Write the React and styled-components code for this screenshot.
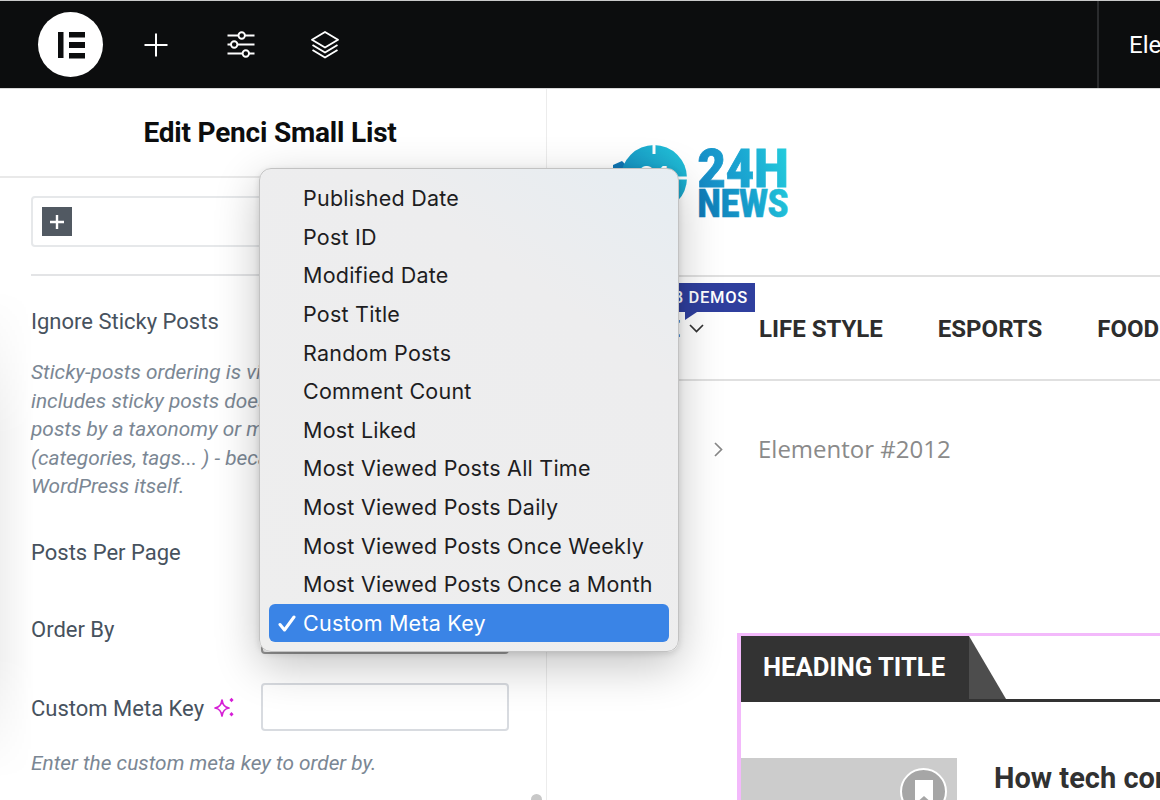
import React from "react";
import styled, { createGlobalStyle } from "styled-components";

const Global = createGlobalStyle`
  html, body { margin: 0; padding: 0; background: #fff; }
  body { font-family: Roboto, "Liberation Sans", sans-serif; overflow: hidden; }
  * { box-sizing: border-box; }
`;

const Page = styled.div`
  position: relative;
  width: 1160px;
  height: 800px;
  overflow: hidden;
  display: flex;
  flex-direction: column;
`;

const TopBar = styled.header`
  height: 89px;
  flex: none;
  display: flex;
  align-items: center;
  padding-left: 38px;
  background: #0c0d0e;
  border-top: 1px solid #c9c9c9;
  border-bottom: 1px solid #d8d8d8;
`;

const LogoDisc = styled.div`
  width: 65px;
  height: 65px;
  border-radius: 50%;
  background: #fff;
  display: flex;
  align-items: center;
  justify-content: center;
  margin-right: 33px;
`;

const ToolIcon = styled.div`
  width: 40px;
  height: 40px;
  margin-right: 44.5px;
  display: flex;
  align-items: center;
  justify-content: center;
  color: #fff;
`;

const TopTitle = styled.div`
  margin-left: auto;
  width: 63px;
  height: 100%;
  border-left: 2px solid #2a2b2d;
  padding-left: 30px;
  display: flex;
  align-items: center;
  color: #fff;
  font-size: 24px;
  white-space: nowrap;
  overflow: hidden;
`;

const Body = styled.div`
  flex: 1;
  min-height: 0;
  display: flex;
`;

const Panel = styled.aside`
  position: relative;
  width: 547px;
  flex: none;
  background: #fff;
  border-right: 1px solid #ececec;
  overflow: hidden;
  &::before {
    content: "";
    position: absolute;
    left: 0;
    top: 200px;
    bottom: 20px;
    width: 34px;
    background: linear-gradient(90deg, rgba(0,0,0,.06), rgba(0,0,0,0));
    -webkit-mask-image: linear-gradient(180deg, transparent, #000 30%, #000 75%, transparent);
    mask-image: linear-gradient(180deg, transparent, #000 30%, #000 75%, transparent);
  }
`;

const PanelHead = styled.div`
  height: 89px;
  display: flex;
  align-items: center;
  justify-content: center;
  border-bottom: 2px solid #e9e9e9;
  font-size: 28px;
  font-weight: 700;
  letter-spacing: -0.2px;
  color: #0c0d0e;
  padding: 0 6px 1px 0;
`;

const PanelBody = styled.div`
  position: relative;
  padding: 18px 37px 0 31px;
`;

const Repeater = styled.div`
  height: 51px;
  border: 2px solid #e6e8ea;
  border-radius: 4px;
  padding: 9px;
`;

const AddButton = styled.div`
  width: 30px;
  height: 29px;
  background: #515962;
  color: #fff;
  display: flex;
  align-items: center;
  justify-content: center;
`;

const Separator = styled.div`
  height: 2px;
  margin-top: 27px;
  background: #e3e4e6;
`;

const Label = styled.label`
  display: flex;
  align-items: center;
  gap: 10px;
  font-size: 22px;
  color: #47525e;
  white-space: nowrap;
`;

const Input = styled.div`
  height: 48px;
  border: 2px solid ${p => (p.$shaded ? "#9c9c9c" : "#d8dbe0")};
  border-radius: 4px;
  background: #fff;
`;

const Field = styled.div`
  display: grid;
  grid-template-columns: 230px 248px;
  align-items: center;
  height: 48px;
  margin-top: ${p => p.$top}px;
  ${p => p.$split && `
    & > label { padding-top: 1px; }
    & > div { margin-bottom: 2px; }
  `}
`;

const Help = styled.div`
  margin-top: ${p => p.$top}px;
  font-size: 20.85px;
  font-style: italic;
  line-height: 28.5px;
  color: #7b8794;
  white-space: nowrap;
`;

const ScrollThumb = styled.div`
  position: absolute;
  left: 531px;
  top: 705px;
  width: 11px;
  height: 40px;
  border-radius: 6px;
  background: #c8c8c8;
`;

const Preview = styled.main`
  flex: 1;
  min-width: 0;
  background: #fff;
  overflow: hidden;
  display: flex;
  flex-direction: column;
`;

const BrandBar = styled.div`
  height: 188px;
  flex: none;
  display: flex;
  align-items: flex-start;
  padding: 59px 0 0 64px;
  border-bottom: 2px solid #e0e0e0;
  gap: 9px;
`;

const NavRow = styled.nav`
  position: relative;
  height: 104px;
  flex: none;
  display: flex;
  align-items: center;
  padding: 1px 0 0 65px;
  border-bottom: 2px solid #e0e0e0;
  font-size: 24px;
  font-weight: 700;
  color: #2d2d2d;
  white-space: nowrap;
  gap: 55px;
`;

const NavItem = styled.span`
  display: inline-flex;
  align-items: center;
  gap: 9px;
`;

const Badge = styled.div`
  position: absolute;
  top: 6px;
  left: 90px;
  width: 118px;
  height: 29px;
  background: #2f3f9e;
  color: #fff;
  font-size: 16.5px;
  font-weight: 500;
  letter-spacing: .7px;
  display: flex;
  align-items: center;
  justify-content: flex-end;
  padding-right: 7px;
  &::after {
    content: "";
    position: absolute;
    left: 48px;
    top: 29px;
    border-top: 8px solid #2f3f9e;
    border-right: 12px solid transparent;
  }
`;

const Crumbs = styled.div`
  height: 252px;
  flex: none;
  padding: 52px 0 0 167px;
  display: flex;
  align-items: flex-start;
  gap: 35px;
  font-family: "Open Sans", sans-serif;
  font-size: 24px;
  line-height: 32px;
  color: #8a8a8a;
`;

const CrumbSep = styled.div`
  width: 9px;
  height: 32px;
  display: flex;
  align-items: center;
`;

const Widget = styled.section`
  margin-left: 190px;
  flex: 1;
  border: solid #f3b9fb;
  border-width: 3px 0 0 4px;
  overflow: hidden;
`;

const HeadingRow = styled.div`
  position: relative;
  height: 66px;
  border-bottom: 3px solid #333;
  display: flex;
`;

const HeadingLabel = styled.h2`
  margin: 0;
  width: 228px;
  height: 66px;
  background: #333;
  color: #fff;
  font-size: 25.6px;
  font-weight: 700;
  line-height: 62px;
  padding-left: 22px;
  white-space: nowrap;
`;

const HeadingTail = styled.svg`
  display: block;
  width: 37px;
  height: 63px;
  flex: none;
`;

const PostRow = styled.article`
  margin-top: 56px;
  display: flex;
  gap: 37px;
`;

const Thumb = styled.div`
  position: relative;
  width: 216px;
  height: 120px;
  flex: none;
  background: #ccc;
`;

const BookMark = styled.div`
  position: absolute;
  top: 10px;
  right: 10px;
  width: 47px;
  height: 47px;
  border-radius: 50%;
  background: #a6a6a6;
  border: 2px solid #fff;
  display: flex;
  align-items: center;
  justify-content: center;
`;

const PostTitle = styled.h3`
  margin: 1px 0 0;
  font-size: 29px;
  font-weight: 700;
  color: #313131;
  line-height: 38px;
  white-space: nowrap;
`;

const Menu = styled.ul`
  position: absolute;
  left: 259px;
  top: 168px;
  width: 420px;
  height: 484px;
  margin: 0;
  padding: 10px 9px;
  list-style: none;
  border-radius: 12px;
  background: linear-gradient(215deg, #e6edf2 0%, #ededee 28%, #eeeeee 100%);
  border: 1px solid #c2c2c2;
  box-shadow: 0 14px 45px rgba(0,0,0,.24), 0 2px 6px rgba(0,0,0,.12);
  font-family: Inter, "Noto Sans", sans-serif;
  font-size: 21.5px;
  color: #1d1d1f;
`;

const MenuItem = styled.li`
  position: relative;
  height: 38.6px;
  display: flex;
  align-items: center;
  padding-left: 34px;
  border-radius: 6px;
  letter-spacing: .23px;
  white-space: nowrap;
  background: ${p => (p.$active ? "#3a84e6" : "transparent")};
  color: ${p => (p.$active ? "#fff" : "#1d1d1f")};
`;

const Check = styled.svg`
  position: absolute;
  left: 9px;
  top: 11px;
  width: 18px;
  height: 17px;
`;

const OPTIONS = [
  "Published Date", "Post ID", "Modified Date", "Post Title", "Random Posts",
  "Comment Count", "Most Liked", "Most Viewed Posts All Time", "Most Viewed Posts Daily",
  "Most Viewed Posts Once Weekly", "Most Viewed Posts Once a Month", "Custom Meta Key",
];

const HELP = [
  "Sticky-posts ordering is visible",
  "includes sticky posts does not",
  "posts by a taxonomy or meta",
  "(categories, tags... ) - because",
  "WordPress itself.",
];

const ElementorMark = () => (
  <svg width="30" height="30" viewBox="0 0 30 30" fill="#0c0d0e">
    <rect x="2" y="2" width="5.5" height="26" />
    <rect x="13" y="2" width="16" height="5.5" />
    <rect x="13" y="12" width="16" height="6" />
    <rect x="13" y="23" width="16" height="5.5" />
  </svg>
);

const PlusIcon = () => (
  <svg width="26" height="26" viewBox="0 0 26 26" stroke="currentColor" strokeWidth="2" fill="none">
    <path d="M13 1.5v23M1.5 13h23" />
  </svg>
);

const SlidersIcon = () => (
  <svg width="30" height="30" viewBox="0 0 30 30" stroke="currentColor" strokeWidth="1.9" fill="none">
    <path d="M1.5 5.5h11M19 5.5h9.5M1.5 14.5h3.5M11.5 14.5h17M1.5 23.5h15M23 23.5h5.5" />
    <circle cx="15.7" cy="5.5" r="3.2" />
    <circle cx="8.2" cy="14.5" r="3.2" />
    <circle cx="19.8" cy="23.5" r="3.2" />
  </svg>
);

const LayersIcon = () => (
  <svg width="30" height="30" viewBox="0 0 30 30" stroke="currentColor" strokeWidth="1.9" fill="none" strokeLinejoin="round">
    <path d="M15 2 28 9.8 15 17.5 2 9.8Z" />
    <path d="M2.5 15 15 22.5 27.5 15" />
    <path d="M2.5 20 15 27.5 27.500 20" />
  </svg>
);

const Sparkle = () => (
  <svg width="22" height="22" viewBox="0 0 22 22" fill="none">
    <path d="M8 3C8.8 8.2 10.5 10.2 15 11C10.5 11.8 8.8 13.8 8 19C7.2 13.8 5.5 11.8 1 11C5.5 10.2 7.2 8.2 8 3Z" stroke="#d61fd6" strokeWidth="1.7" strokeLinejoin="round" />
    <path d="M17.5 .8 19.6 3 17.5 5.2 15.4 3Z M17.5 15 19.6 17.2 17.5 19.4 15.4 17.2Z" fill="#d61fd6" />
  </svg>
);

const BrandClock = () => (
  <svg width="77" height="75" viewBox="0 0 77 75" style={{ flex: "none", marginTop: -7 }}>
    <defs>
      <linearGradient id="clk" x1="0" y1="1" x2="1" y2="0">
        <stop offset="0" stopColor="#0f76b4" />
        <stop offset="1" stopColor="#23c8dc" />
      </linearGradient>
    </defs>
    <path d="M2 24 11 20 20 29 2 29Z" fill="#0f76b4" />
    <circle cx="43" cy="37" r="33" fill="url(#clk)" />
    <path d="M43 3v10M67 37h10" stroke="#fff" strokeWidth="3" />
    <text x="43" y="44" textAnchor="middle" fontFamily="Roboto, sans-serif" fontWeight="900" fontSize="26" fill="#fff">24</text>
  </svg>
);

const BrandWords = () => (
  <svg width="92" height="70" viewBox="0 0 92 70" style={{ flex: "none" }}>
    <defs>
      <linearGradient id="w24" gradientUnits="userSpaceOnUse" x1="0" y1="40" x2="92" y2="10">
        <stop offset="0" stopColor="#1587c4" />
        <stop offset=".55" stopColor="#1ba8d2" />
        <stop offset="1" stopColor="#23cbdc" />
      </linearGradient>
      <linearGradient id="wnews" gradientUnits="userSpaceOnUse" x1="0" y1="70" x2="92" y2="45">
        <stop offset="0" stopColor="#0f76b4" />
        <stop offset=".6" stopColor="#17a0cd" />
        <stop offset="1" stopColor="#22c6da" />
      </linearGradient>
    </defs>
    <text x=".5" y="38.600" fontFamily="Roboto, sans-serif" fontWeight="900" fontSize="54" textLength="91" lengthAdjust="spacingAndGlyphs" fill="url(#w24)" stroke="url(#w24)" strokeWidth=".8">24H</text>
    <text x=".5" y="68.600" fontFamily="Roboto, sans-serif" fontWeight="900" fontSize="38" textLength="91" lengthAdjust="spacingAndGlyphs" fill="url(#wnews)" stroke="url(#wnews)" strokeWidth=".6">NEWS</text>
  </svg>
);

export default function App() {
  return (
    <Page>
      <Global />
      <TopBar>
        <LogoDisc><ElementorMark /></LogoDisc>
        <ToolIcon><PlusIcon /></ToolIcon>
        <ToolIcon><SlidersIcon /></ToolIcon>
        <ToolIcon><LayersIcon /></ToolIcon>
        <TopTitle>Elementor</TopTitle>
      </TopBar>
      <Body>
        <Panel>
          <PanelHead>Edit Penci Small List</PanelHead>
          <PanelBody>
            <Repeater>
              <AddButton>
                <svg width="14" height="14" viewBox="0 0 14 14" stroke="#fff" strokeWidth="2.4"><path d="M7 0v14M0 7h14" /></svg>
              </AddButton>
            </Repeater>
            <Separator />
            <Field $top={21}><Label>Ignore Sticky Posts</Label></Field>
            <Help $top={13}>{HELP.map(l => <div key={l}>{l}</div>)}</Help>
            <Field $top={28}><Label>Posts Per Page</Label><Input /></Field>
            <Field $top={29}><Label>Order By</Label><Input $shaded /></Field>
            <Field $top={29} $split><Label>Custom Meta Key <Sparkle /></Label><Input /></Field>
            <Help $top={18}>Enter the custom meta key to order by.</Help>
          </PanelBody>
          <ScrollThumb />
        </Panel>
        <Preview>
          <BrandBar>
            <BrandClock />
            <BrandWords />
          </BrandBar>
          <NavRow>
            <Badge>58 DEMOS</Badge>
            <NavItem>
              HOME
              <svg width="15" height="9" viewBox="0 0 15 9" fill="none" stroke="#333" strokeWidth="1.7"><path d="M1 1l6.5 6.5L14 1" /></svg>
            </NavItem>
            <NavItem>LIFE STYLE</NavItem>
            <NavItem>ESPORTS</NavItem>
            <NavItem>FOOD</NavItem>
          </NavRow>
          <Crumbs>
            <CrumbSep>
              <svg width="9" height="15" viewBox="0 0 9 15" fill="none" stroke="#888" strokeWidth="1.7"><path d="M1 1l6.5 6.5L1 14" /></svg>
            </CrumbSep>
            <span>Elementor #2012</span>
          </Crumbs>
          <Widget>
            <HeadingRow>
              <HeadingLabel>HEADING TITLE</HeadingLabel>
              <HeadingTail viewBox="0 0 37 63"><path d="M0 0 37 63H0Z" fill="#4d4d4d" /></HeadingTail>
            </HeadingRow>
            <PostRow>
              <Thumb>
                <BookMark>
                  <svg width="20" height="26" viewBox="0 0 20 26" fill="#fff"><path d="M1 1h18v24l-9-8-9 8Z" /></svg>
                </BookMark>
              </Thumb>
              <PostTitle>How tech companies</PostTitle>
            </PostRow>
          </Widget>
        </Preview>
      </Body>
      <Menu>
        {OPTIONS.map(o => {
          const active = o === "Custom Meta Key";
          return (
            <MenuItem key={o} $active={active}>
              {active && (
                <Check viewBox="0 0 18 17" fill="none" stroke="#fff" strokeWidth="3" strokeLinecap="round" strokeLinejoin="round">
                  <path d="M2 9.5 6.5 15 16 2" />
                </Check>
              )}
              {o}
            </MenuItem>
          );
        })}
      </Menu>
    </Page>
  );
}
